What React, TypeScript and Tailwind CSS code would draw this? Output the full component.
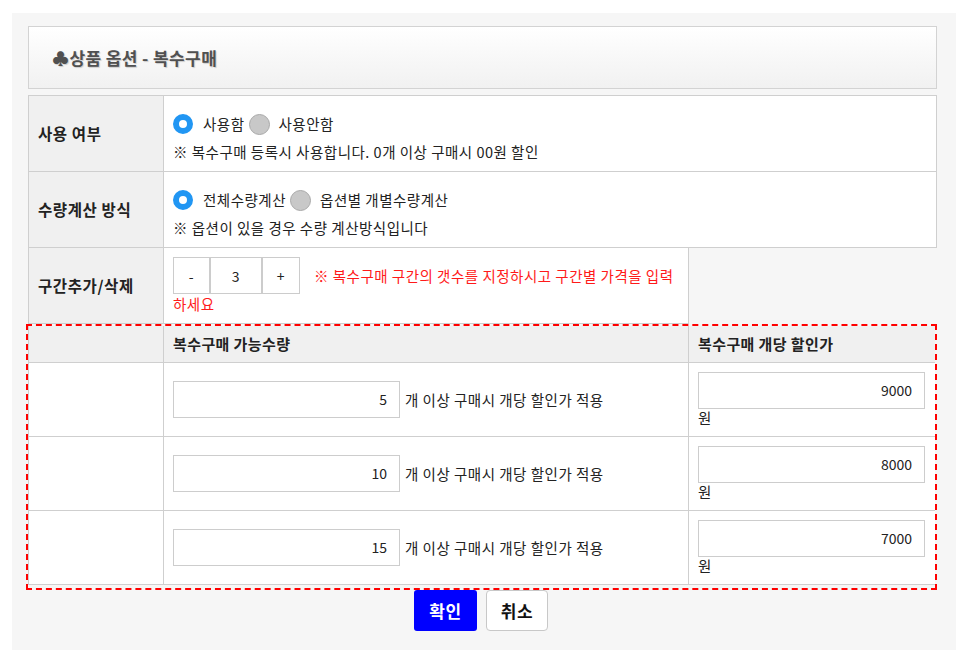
import React from "react";

const sans = "font-['Noto_Sans_CJK_KR','Noto_Sans',sans-serif]";

function Radio({ checked }: { checked: boolean }) {
  return checked ? (
    <span className="inline-block h-[20px] w-[20px] shrink-0 rounded-full border-[6px] border-[#2196f3] bg-white" />
  ) : (
    <span className="inline-block h-[21px] w-[21px] shrink-0 rounded-full border border-[#a9a9a9] bg-[#c8c8c8]" />
  );
}

function RadioRow({ on, off }: { on: string; off: string }) {
  return (
    <div className="flex h-[22px] items-center leading-[18px]">
      <Radio checked />
      <span className="ml-[10px] text-[#222]">{on}</span>
      <span className="ml-[4px] flex items-center">
        <Radio checked={false} />
      </span>
      <span className="ml-[9px] text-[#222]">{off}</span>
    </div>
  );
}

const th =
  "flex items-center border-b border-r border-[#cfcfcf] bg-[#f0f0f0] pl-[9px] text-[15.5px] font-bold tracking-[0.6px] text-[#222]";

function AmountInput({ value }: { value: string }) {
  return (
    <div className="flex h-[37px] w-[227px] items-center justify-end border border-[#cdcdcd] bg-white pr-[12px] text-[14px] tracking-normal text-[#222]">
      {value}
    </div>
  );
}

const tiers = [
  { qty: "5", price: "9000" },
  { qty: "10", price: "8000" },
  { qty: "15", price: "7000" },
];

export default function App() {
  return (
    <div className={`min-h-screen bg-white ${sans} text-[14.5px] tracking-[0.5px] text-[#222]`}>
      <div className="ml-[12px] w-[944px] bg-[#f6f6f6] px-[16px] pb-[19px] pt-[13px] [margin-top:13px]">
        {/* title bar */}
        <div className="flex h-[63px] w-[909px] items-center border border-[#d3d3d3] bg-linear-to-b from-white to-[#f1f1f1] pl-[23px]">
          <span className="text-[17px] font-bold tracking-[0.4px] text-[#505050] [text-shadow:1px_1px_1px_rgba(0,0,0,0.18)]">
            ♣상품 옵션 - 복수구매
          </span>
        </div>

        {/* settings table */}
        <div className="mt-[6px] grid w-[909px] grid-cols-[135px_525px_248px] border-l border-t border-[#cfcfcf]">
          <div className={`${th} h-[76px]`}>사용 여부</div>
          <div className="col-span-2 h-[76px] border-b border-r border-[#cfcfcf] bg-white pl-[9px] pt-[17px]">
            <RadioRow on="사용함" off="사용안함" />
            <div className="mt-[8px] leading-[18px]">
              ※ 복수구매 등록시 사용합니다. 0개 이상 구매시 00원 할인
            </div>
          </div>

          <div className={`${th} h-[76px]`}>수량계산 방식</div>
          <div className="col-span-2 h-[76px] border-b border-r border-[#cfcfcf] bg-white pl-[9px] pt-[17px]">
            <RadioRow on="전체수량계산" off="옵션별 개별수량계산" />
            <div className="mt-[8px] leading-[18px]">※ 옵션이 있을 경우 수량 계산방식입니다</div>
          </div>

          <div className={`${th} h-[76px]`}>구간추가/삭제</div>
          <div className="h-[76px] border-b border-r border-[#cfcfcf] bg-white pl-[9px] pt-[9px] leading-[16px]">
            <div className="mb-[2px] inline-flex h-[37px] overflow-hidden align-baseline text-[14px] text-[#222]">
              <span className="flex w-[37px] items-center justify-center border border-[#cccccc] bg-white">-</span>
              <span className="flex w-[52px] items-center justify-center border border-[#cccccc] bg-white">3</span>
              <span className="flex w-[38px] items-center justify-center border border-[#cccccc] bg-white">+</span>
            </div>
            <span className="ml-[14px] whitespace-nowrap text-[#ff1a1a]">
              ※ 복수구매 구간의 갯수를 지정하시고 구간별 가격을 입력
            </span>
            <br />
            <span className="text-[#ff1a1a]">하세요</span>
          </div>
          <div className="h-[76px]" />
        </div>

        {/* tier table */}
        <div className="ml-[-2px] w-[911px] border-2 border-dashed border-[#ff0000] pb-[3px]">
          <div className="grid grid-cols-[135px_525px_246px] border-l border-[#cfcfcf]">
            <div className="h-[37px] border-b border-r border-[#cfcfcf] bg-[#f0f0f0]" />
            <div className="flex h-[37px] items-center border-b border-r border-[#cfcfcf] bg-[#f0f0f0] pl-[9px] text-[15px] font-bold tracking-[0.4px]">
              복수구매 가능수량
            </div>
            <div className="flex h-[37px] items-center border-b border-[#cfcfcf] bg-[#f0f0f0] pl-[9px] text-[15px] font-bold tracking-[0.4px]">
              복수구매 개당 할인가
            </div>

            {tiers.map((t) => (
              <React.Fragment key={t.qty}>
                <div className="h-[74px] border-b border-r border-[#cfcfcf] bg-white" />
                <div className="flex h-[74px] items-center gap-[5px] border-b border-r border-[#cfcfcf] bg-white pl-[9px]">
                  <AmountInput value={t.qty} />
                  <span>개 이상 구매시 개당 할인가 적용</span>
                </div>
                <div className="flex h-[74px] flex-col justify-center border-b border-[#cfcfcf] bg-white pl-[9px]">
                  <AmountInput value={t.price} />
                  <span className="leading-[18px]">원</span>
                </div>
              </React.Fragment>
            ))}
          </div>
        </div>

        {/* actions */}
        <div className="flex w-[909px] justify-center gap-[9px] pr-[3px]">
          <button className="h-[41px] w-[63px] rounded-[3px] bg-[#0000ff] text-[17px] font-bold text-white">
            확인
          </button>
          <button className="h-[41px] w-[62px] rounded-[4px] border border-[#c8c8c8] bg-white text-[17px] font-bold text-[#111]">
            취소
          </button>
        </div>
      </div>
    </div>
  );
}
